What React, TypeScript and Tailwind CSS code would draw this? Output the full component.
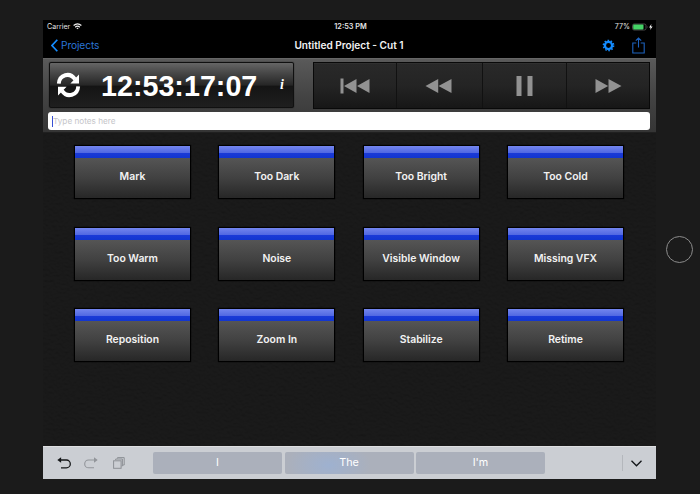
import React from "react";

const rows = [
  ["Mark", "Too Dark", "Too Bright", "Too Cold"],
  ["Too Warm", "Noise", "Visible Window", "Missing VFX"],
  ["Reposition", "Zoom In", "Stabilize", "Retime"],
];

function StatusBar() {
  return (
    <div className="grid h-[13px] grid-cols-3 items-center pl-[4px] pr-[3px] text-[7.1px] leading-[13px] text-[#e4e4e4]">
      <div className="flex items-center gap-[3px]">
        <span>Carrier</span>
        <svg width="9" height="7" viewBox="0 0 9 7" fill="none" stroke="#f2f2f2" strokeWidth="1.2">
          <path d="M0.6 2.5 Q4.5 -0.9 8.4 2.5" />
          <path d="M2.2 4.2 Q4.5 2.2 6.8 4.2" />
          <path d="M3.3 5.1 Q4.5 4.2 5.7 5.1 L4.5 6.3Z" fill="#f2f2f2" stroke="none" />
        </svg>
      </div>
      <span className="pl-px text-center text-[7.3px] font-semibold">12:53 PM</span>
      <div className="flex items-center justify-end">
        <span className="mr-[2px]">77%</span>
        <svg width="21" height="8" viewBox="0 0 21 8">
          <rect x="0.5" y="1" width="13.5" height="6" rx="1.6" fill="none" stroke="#5c5c5c" strokeWidth="0.8" />
          <rect x="1.2" y="1.6" width="10.3" height="4.8" rx="0.8" fill="#45d366" />
          <path d="M15 3v2q1.2-1 0-2" fill="#5c5c5c" />
          <path d="M19.4 1 L17.1 4.4 H18.7 L18.1 7 L20.6 3.5 H19Z" fill="#fff" />
        </svg>
      </div>
    </div>
  );
}

function NavBar() {
  return (
    <div className="grid h-[25px] grid-cols-3 items-center pl-[8px] pr-[11px] text-[10.2px] leading-[25px]">
      <div className="flex items-center gap-[3px] text-[#2a76d8]">
        <svg width="7" height="13" viewBox="0 0 7 13" fill="none" stroke="#148cff" strokeWidth="1.7">
          <path d="M6.3 0.7 L1 6.5 L6.3 12.3" />
        </svg>
        <span className="tracking-[-0.1px]">Projects</span>
      </div>
      <span className="whitespace-nowrap pl-[2px] text-center text-[10.1px] font-semibold text-[#f2f2f2]">Untitled Project - Cut 1</span>
      <div className="flex items-center justify-end gap-[17px]">
        <svg width="13" height="13" viewBox="-6.5 -6.5 13 13" fill="none" stroke="#148cff">
          <circle r="3.6" strokeWidth="2.3" />
          <circle r="5.1" strokeWidth="1.5" strokeDasharray="1.6 1.604" />
        </svg>
        <svg width="13" height="17" viewBox="0 0 13 17" fill="none" stroke="#1d62bd" strokeWidth="1.1">
          <path d="M4.3 6H0.8V16H12.2V6H8.7M6.5 10.5V1.2M3.8 3.7L6.5 1L9.2 3.7" />
        </svg>
      </div>
    </div>
  );
}

function Clock() {
  return (
    <div className="ml-px flex h-[46px] w-[245px] items-center rounded-[2px] border border-[#101010] bg-[linear-gradient(#666_0%,#484848_22%,#262626_50%,#141414_53%,#1f1f1f_100%)] pl-[6px] pr-[9px] shadow-[0_0_1px_#000]">
      <svg width="25" height="26" viewBox="0 0 25 24" preserveAspectRatio="none" fill="none" stroke="#fff" strokeWidth="3.8">
        <path d="M2.8 10.8 C3.3 2.5 13.8 -0.4 19 6.7" />
        <path d="M22.2 13.2 C21.7 21.5 11.2 24.4 6 17.3" />
        <path d="M23 2.2V10.5H14.4Z M2 21.8V13.5H10.6Z" fill="#fff" stroke="none" />
      </svg>
      <span className="ml-[20px] mt-[2px] font-['Liberation_Sans',sans-serif] text-[28.7px] font-bold leading-[42px] text-white">12:53:17:07</span>
      <span className="mb-px ml-auto font-['Liberation_Serif',serif] text-[14px] font-bold italic leading-none text-white">i</span>
    </div>
  );
}

function Transport() {
  const cell = "flex flex-1 items-center justify-center border-r border-[#111] last:border-r-0";
  return (
    <div className="flex h-[47px] w-[337px] border border-[#090909] bg-linear-to-b from-[#292929] via-[#242424] to-[#171717] shadow-[inset_0_1px_0_#303030]">
      <div className={cell}>
        <svg width="30" height="16" viewBox="0 0 30 16" fill="#929292">
          <path d="M0.5 0.5H3.5V15.5H0.5Z M4 8L16.5 1V15Z M17 8L29.5 1V15Z" />
        </svg>
      </div>
      <div className={`${cell} pr-[3px]`}>
        <svg width="27" height="16" viewBox="0 0 27 16" fill="#929292">
          <path d="M0.5 8L13.2 1V15Z M13.5 8L26.5 1V15Z" />
        </svg>
      </div>
      <div className={`${cell} pr-px`}>
        <svg width="17" height="20" viewBox="0 0 17 20" fill="#929292">
          <path d="M0.5 0H5.5V20H0.5Z M11.5 0H16.5V20H11.5Z" />
        </svg>
      </div>
      <div className={cell}>
        <svg width="27" height="16" viewBox="0 0 27 16" fill="#929292">
          <path d="M0.5 1L13.2 8L0.5 15Z M13.5 1L26.5 8L13.5 15Z" />
        </svg>
      </div>
    </div>
  );
}

function Marker({ label }: { label: string }) {
  return (
    <button className="flex h-[54px] w-[117px] flex-col border border-black bg-black shadow-[0_0_1px_#000]">
      <span className="h-[7px] w-full bg-linear-to-b from-[#7385ee] to-[#5067e2]" />
      <span className="h-[5px] w-full bg-linear-to-b from-[#1b3ad8] to-[#1236cf]" />
      <span className="flex w-full flex-1 items-center justify-center bg-linear-to-b from-[#555] via-[#414141] to-[#272727] pb-px text-[10.4px] font-semibold leading-none text-[#f2f2f2]">
        {label}
      </span>
    </button>
  );
}

function Markers() {
  return (
    <div className="relative h-[313px] bg-[#141414]">
      <svg className="absolute inset-0 h-full w-full opacity-[0.06]" aria-hidden="true">
        <filter id="leather">
          <feTurbulence type="fractalNoise" baseFrequency="0.35" numOctaves="3" seed="4" result="n" />
          <feDiffuseLighting in="n" surfaceScale="1.6" lightingColor="#888">
            <feDistantLight azimuth="100" elevation="45" />
          </feDiffuseLighting>
        </filter>
        <rect width="100%" height="100%" filter="url(#leather)" />
      </svg>
      <div className="relative grid grid-cols-[repeat(4,117px)] justify-between gap-y-[27.5px] pl-[31px] pr-[32px] pt-[12px]">
        {rows.flat().map((label) => (
          <Marker key={label} label={label} />
        ))}
      </div>
    </div>
  );
}

function KeyboardBar() {
  const suggestion = "flex h-[22px] w-[129px] items-center justify-center rounded-[2px] bg-[#abb0bb] text-[10.8px] text-white";
  return (
    <div className="flex h-[33px] items-center border-t border-[#dedfe1] bg-[#cbced3] pl-[14px]">
      <svg width="14" height="12" viewBox="0 0 14 12" fill="none" stroke="#151719" strokeWidth="1.3">
        <path d="M2 3H9.4A3.7 3.7 0 0 1 9.4 10.8H4" />
        <path d="M0.3 3L4.1 0.2V5.8Z" fill="#151719" stroke="none" />
      </svg>
      <svg className="ml-[13px]" width="14" height="12" viewBox="0 0 14 12" fill="none" stroke="#92959a" strokeWidth="1.1">
        <path d="M12 3H4.6A3.7 3.7 0 0 0 4.6 10.8H10" />
        <path d="M13.7 3L10 0.3V5.7Z" fill="#92959a" stroke="none" />
      </svg>
      <svg className="ml-[15px]" width="12" height="12" viewBox="0 0 12 12" fill="none" stroke="#8d9095">
        <path d="M2.7 3V2H9.4V9H8.5 M4.5 1.5V0.6H11.2V8H10" />
        <rect x="0.6" y="3.8" width="7.5" height="7.5" />
      </svg>
      <div className="ml-[28px] flex gap-[2.5px]">
        <div className={suggestion}>I</div>
        <div className={`${suggestion} bg-[radial-gradient(ellipse_42px_24px_at_34%_60%,#9eb1d0,#9eb1d000)]`}>The</div>
        <div className={suggestion}>I'm</div>
      </div>
      <div className="ml-auto h-[16px] w-px bg-[#b4b7bc]" />
      <svg className="ml-[8px] mr-[14px]" width="11" height="7" viewBox="0 0 11 7" fill="none" stroke="#111417" strokeWidth="1.3">
        <path d="M0.5 0.7L5.5 5.8L10.5 0.7" />
      </svg>
    </div>
  );
}

export default function App() {
  return (
    <div className="flex h-[494px] w-[700px] items-start overflow-hidden bg-[#1b1b1b] pl-[43px] pt-[20px] font-['Inter',sans-serif]">
      <main className="w-[613px] shrink-0 bg-black">
        <StatusBar />
        <NavBar />
        <div className="h-[75px] border-b border-t border-b-[#202020] border-t-[#666] bg-linear-to-b from-[#5a5a5a] via-[#444] to-[#353535] pl-[5px] pr-[6px] pt-[3px]">
          <div className="flex justify-between">
            <Clock />
            <Transport />
          </div>
          <div className="mt-[3px] flex h-[18px] items-center rounded-[3px] bg-white pl-[4px]">
            <span className="h-[11px] w-px bg-[#3850d5]" />
            <span className="text-[8.2px] text-[#c5c5c9]">Type notes here</span>
          </div>
        </div>
        <Markers />
        <KeyboardBar />
      </main>
      <div className="ml-[10px] mt-[216px] size-[27px] shrink-0 rounded-full border border-[#8b8b8b]" />
    </div>
  );
}
